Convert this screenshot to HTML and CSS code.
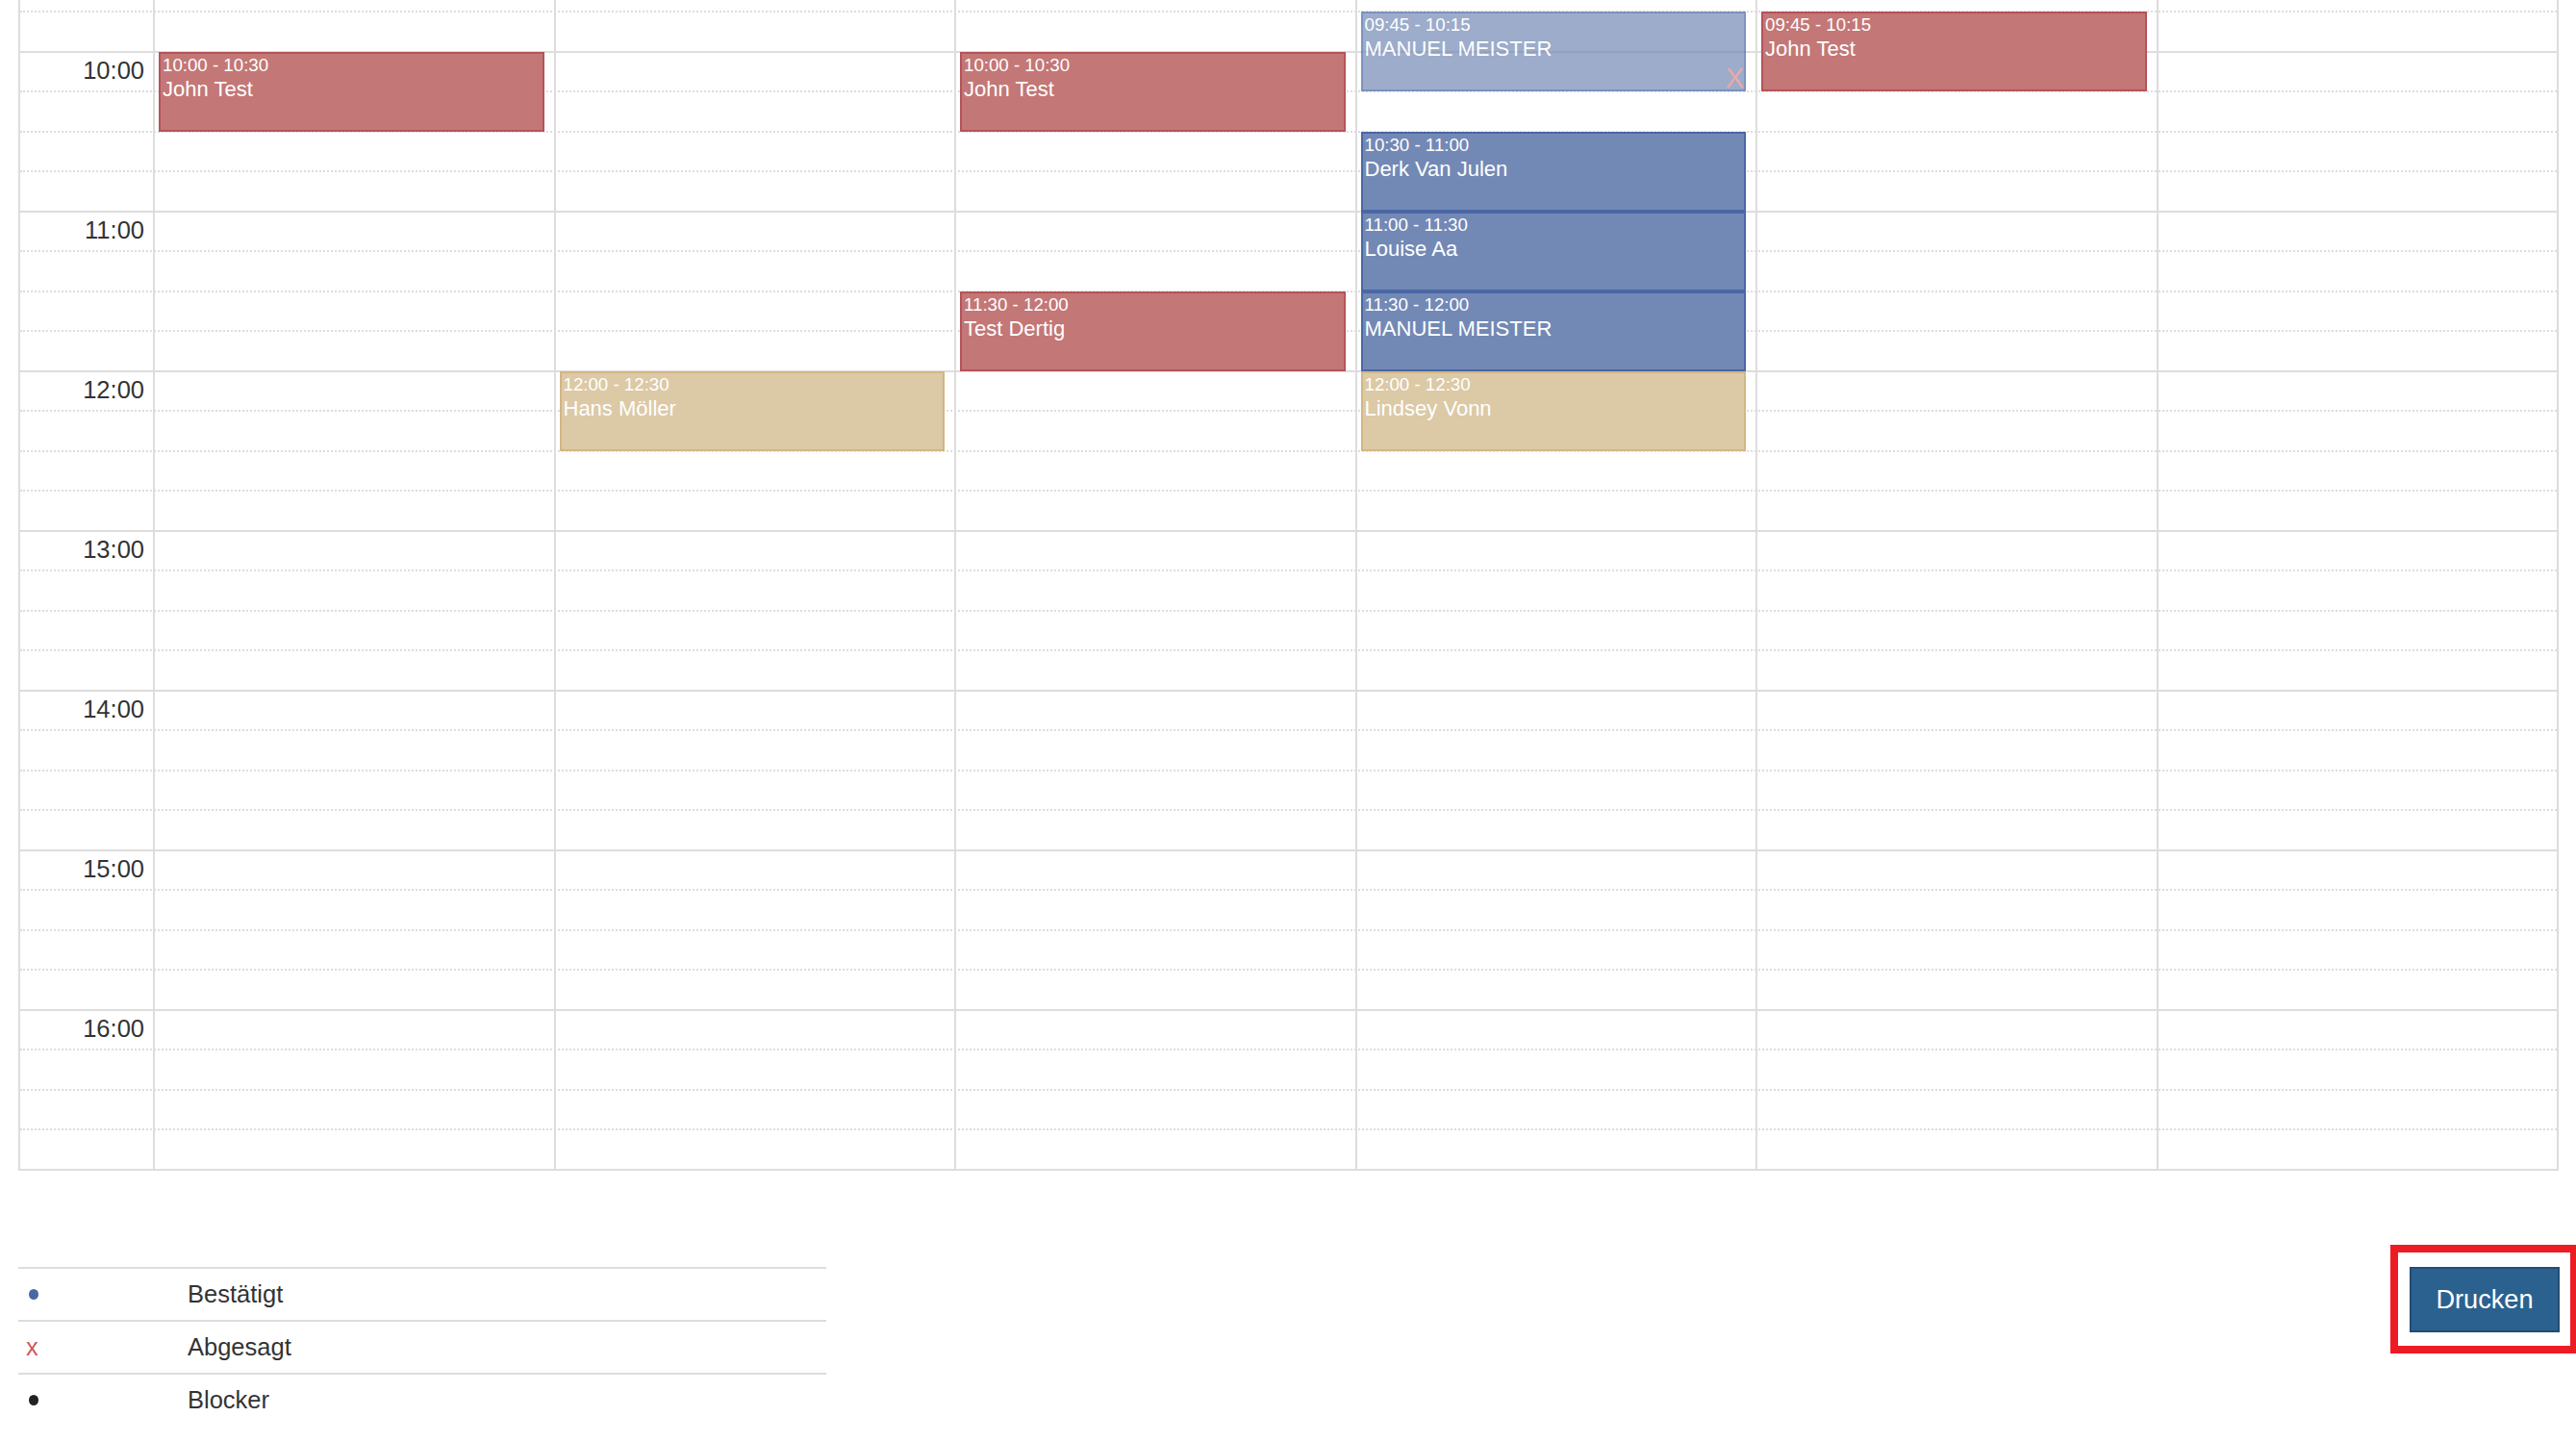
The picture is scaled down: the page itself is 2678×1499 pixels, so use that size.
FILE: index.html
```html
<!DOCTYPE html>
<html lang="de">
<head>
<meta charset="utf-8">
<title>Kalender</title>
<link rel="stylesheet" href="styles.css">
</head>
<body>
<div class="page">
  <div class="cal">
    <div class="slots">
      <div class="slot first"></div>
      <div class="slot h"></div>
      <div class="slot"><span class="tl">10:00</span></div>
      <div class="slot"></div>
      <div class="slot"></div>
      <div class="slot h"></div>
      <div class="slot"><span class="tl">11:00</span></div>
      <div class="slot"></div>
      <div class="slot"></div>
      <div class="slot h"></div>
      <div class="slot"><span class="tl">12:00</span></div>
      <div class="slot"></div>
      <div class="slot"></div>
      <div class="slot h"></div>
      <div class="slot"><span class="tl">13:00</span></div>
      <div class="slot"></div>
      <div class="slot"></div>
      <div class="slot h"></div>
      <div class="slot"><span class="tl">14:00</span></div>
      <div class="slot"></div>
      <div class="slot"></div>
      <div class="slot h"></div>
      <div class="slot"><span class="tl">15:00</span></div>
      <div class="slot"></div>
      <div class="slot"></div>
      <div class="slot h"></div>
      <div class="slot"><span class="tl">16:00</span></div>
      <div class="slot"></div>
      <div class="slot"></div>
      <div class="slot h"></div>
    </div>
    <div class="cols">
      <div class="tcol"></div>
      <div class="dcol"></div>
      <div class="dcol"></div>
      <div class="dcol"></div>
      <div class="dcol"></div>
      <div class="dcol"></div>
      <div class="dcol"></div>
    </div>
    <div class="events">
      <div class="ev red" style="grid-column:2;grid-row:3 / span 2"><div class="t">10:00 - 10:30</div><div class="n">John Test</div></div>
      <div class="ev tan" style="grid-column:3;grid-row:11 / span 2"><div class="t">12:00 - 12:30</div><div class="n">Hans Möller</div></div>
      <div class="ev red" style="grid-column:4;grid-row:3 / span 2"><div class="t">10:00 - 10:30</div><div class="n">John Test</div></div>
      <div class="ev red" style="grid-column:4;grid-row:9 / span 2"><div class="t">11:30 - 12:00</div><div class="n">Test Dertig</div></div>
      <div class="ev blue cancelled" style="grid-column:5;grid-row:2 / span 2"><div class="t">09:45 - 10:15</div><div class="n">MANUEL MEISTER</div><span class="x">X</span></div>
      <div class="ev blue" style="grid-column:5;grid-row:5 / span 2"><div class="t">10:30 - 11:00</div><div class="n">Derk Van Julen</div></div>
      <div class="ev blue" style="grid-column:5;grid-row:7 / span 2"><div class="t">11:00 - 11:30</div><div class="n">Louise Aa</div></div>
      <div class="ev blue" style="grid-column:5;grid-row:9 / span 2"><div class="t">11:30 - 12:00</div><div class="n">MANUEL MEISTER</div></div>
      <div class="ev tan" style="grid-column:5;grid-row:11 / span 2"><div class="t">12:00 - 12:30</div><div class="n">Lindsey Vonn</div></div>
      <div class="ev red" style="grid-column:6;grid-row:2 / span 2"><div class="t">09:45 - 10:15</div><div class="n">John Test</div></div>
    </div>
  </div>

  <div class="footer">
    <table class="legend">
      <tr><td class="ic"><span class="dot blue-dot"></span></td><td>Bestätigt</td></tr>
      <tr><td class="ic"><span class="lx">x</span></td><td>Abgesagt</td></tr>
      <tr><td class="ic"><span class="dot black-dot"></span></td><td>Blocker</td></tr>
    </table>
    <div class="print">
      <button class="btn" type="button">Drucken</button>
      <span class="mark"></span>
    </div>
  </div>
</div>
</body>
</html>
```

FILE: styles.css
```css
html, body {
  margin: 0;
  padding: 0;
  background: #fff;
  overflow: hidden;
}

body {
  font-family: "Liberation Sans", Arial, sans-serif;
  color: #333;
}

.page {
  padding: 0 18px 0 19px;
}

/* calendar grid */
.cal {
  position: relative;
  border-left: 2px solid #ddd;
  border-right: 2px solid #ddd;
}

.slot {
  box-sizing: border-box;
  height: 41.5px;
  border-bottom: 2px dotted #ddd;
}

.slot.first {
  height: 13px;
}

.slot.h {
  border-bottom: 2px solid #ddd;
}

.tl {
  display: block;
  box-sizing: border-box;
  width: 138px;
  padding: 4px 9px 0 0;
  text-align: right;
  font-size: 25.5px;
  line-height: 1.15;
  color: #333;
}

.cols {
  position: absolute;
  inset: 0;
  display: grid;
  grid-template-columns: 138px repeat(6, 1fr);
  pointer-events: none;
}

.dcol {
  border-left: 2px solid #ddd;
}

.events {
  position: absolute;
  inset: 0;
  display: grid;
  grid-template-columns: 138px repeat(6, 1fr);
  grid-template-rows: 12px repeat(29, 41.5px);
}

.ev {
  position: relative;
  box-sizing: border-box;
  min-width: 0;
  margin: 0 10px 0 6px;
  border: 2px solid;
  padding: 0 2px;
  color: #fff;
}

.ev .t {
  font-size: 18.7px;
  line-height: 1.3;
  white-space: nowrap;
}

.ev .n {
  font-size: 22px;
  line-height: 1.2;
  white-space: nowrap;
}

.red {
  background: #c37776;
  border-color: #b5535a;
}

.blue {
  background: #7389b5;
  border-color: #4a66a5;
}

.tan {
  background: #dcc9a6;
  border-color: #d3b684;
}

.cancelled {
  opacity: 0.7;
}

.cancelled .x {
  position: absolute;
  right: 0;
  bottom: 0;
  font-size: 29px;
  line-height: 0.8;
  color: #e08686;
}

/* footer: legend + print button */
.footer {
  display: flex;
  justify-content: space-between;
  align-items: flex-start;
  margin-top: 100px;
}

.legend {
  width: 840px;
  border-collapse: collapse;
  font-size: 25.5px;
  color: #333;
}

.legend td {
  border-top: 2px solid #ddd;
  padding: 8px;
  line-height: 37px;
  vertical-align: middle;
}

.legend .ic {
  width: 20%;
}

.dot {
  display: inline-block;
  width: 10px;
  height: 11px;
  margin-left: 3px;
  border-radius: 50%;
  vertical-align: middle;
  position: relative;
  top: -1px;
}

.blue-dot {
  background: #4a66a5;
}

.black-dot {
  background: #222;
}

.lx {
  color: #d0595c;
}

.print {
  position: relative;
  margin-right: -1px;
}

.btn {
  display: block;
  box-sizing: border-box;
  width: 156px;
  height: 68px;
  margin: 0;
  padding: 0 25px;
  border: 2px solid #214e74;
  border-radius: 0;
  background: #2b618f;
  color: #fff;
  font-family: "Liberation Sans", Arial, sans-serif;
  font-size: 27.2px;
  line-height: 1;
}

.mark {
  position: absolute;
  top: -23px;
  left: -20px;
  right: -19px;
  bottom: -22px;
  border: 8px solid #ed1c24;
  pointer-events: none;
}
```
